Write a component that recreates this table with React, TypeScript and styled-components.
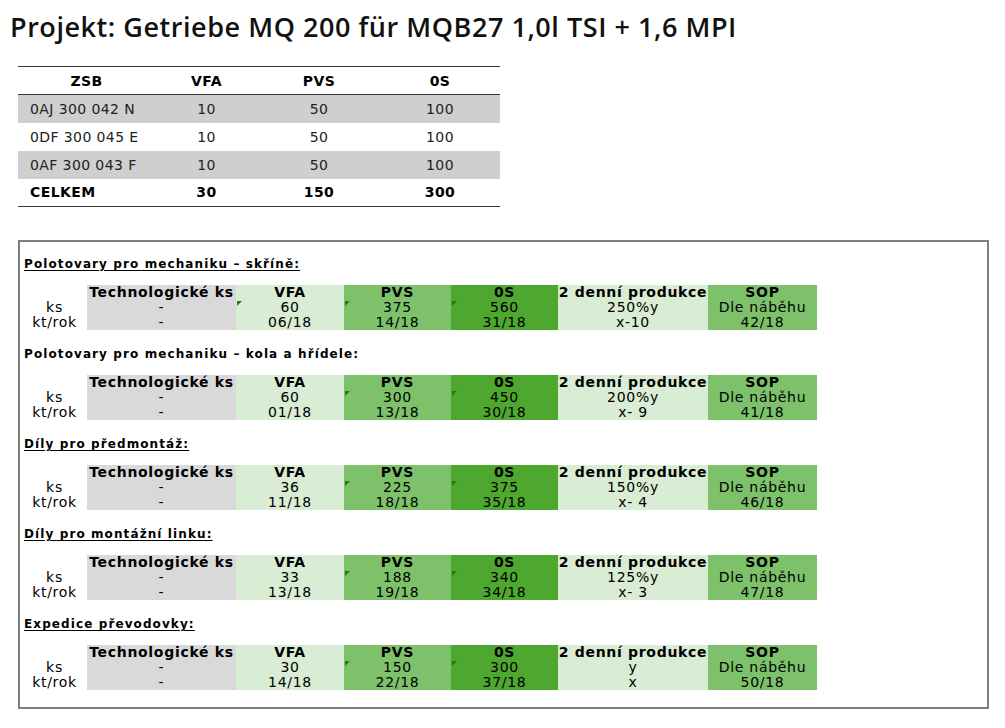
import React from 'react';
import styled, { createGlobalStyle } from 'styled-components';

const Global = createGlobalStyle`
  html, body { margin: 0; padding: 0; background: #ffffff; }
  body { font-family: "DejaVu Sans", Verdana, sans-serif; color: #000; }
`;

const Page = styled.div`
  width: 1005px;
  height: 728px;
  box-sizing: border-box;
  padding: 7px 0 0 10px;
`;

const Title = styled.h1`
  margin: 0;
  font-family: "Open Sans", sans-serif;
  font-weight: 600;
  font-size: 27px;
  line-height: 40px;
  letter-spacing: 0.55px;
  color: #111;
`;

const TopTable = styled.table`
  margin: 19px 0 0 8px;
  width: 482px;
  border-collapse: collapse;
  font-size: 14px;
  letter-spacing: 0.4px;
  border-top: 1px solid #333;
  border-bottom: 1px solid #333;
`;

const HeadCell = styled.th<{ $w: number }>`
  width: ${p => p.$w}px;
  height: 27px;
  padding: 0;
  font-weight: bold;
  text-align: center;
  border-bottom: 1px solid #333;
`;

const Row = styled.tr<{ $shade?: boolean }>`
  background: ${p => (p.$shade ? '#cfcfcf' : '#ffffff')};
  height: 28px;
`;

const Cell = styled.td<{ $left?: boolean; $bold?: boolean }>`
  padding: 0 0 0 ${p => (p.$left ? '12px' : '0')};
  text-align: ${p => (p.$left ? 'left' : 'center')};
  font-weight: ${p => (p.$bold ? 'bold' : 'normal')};
  color: ${p => (p.$bold ? '#000' : '#222')};
`;

const Box = styled.div`
  margin: 33px 0 0 8px;
  width: 971px;
  box-sizing: border-box;
  border: 2px solid #7f7f7f;
  padding: 15px 0 17px 4px;
  display: flex;
  flex-direction: column;
  gap: 17px;
`;

const Section = styled.div`
  display: flex;
  flex-direction: column;
  gap: 13px;
`;

const Heading = styled.div<{ $underline: boolean }>`
  font-size: 12px;
  font-weight: bold;
  line-height: 15px;
  letter-spacing: 1.1px;
  text-decoration: ${p => (p.$underline ? 'underline' : 'none')};
  text-underline-offset: 2px;
`;

const Grid = styled.div`
  display: flex;
  margin-left: -2px;
`;

const Column = styled.div<{ $w: number; $bg: string }>`
  width: ${p => p.$w}px;
  background: ${p => p.$bg};
  display: flex;
  flex-direction: column;
`;

const Line = styled.div<{ $bold?: boolean; $flag?: boolean }>`
  position: relative;
  height: 15px;
  line-height: 15px;
  font-size: 14px;
  letter-spacing: 0.7px;
  font-weight: ${p => (p.$bold ? 'bold' : 'normal')};
  text-align: center;
  white-space: nowrap;
  &::before {
    content: '';
    display: ${p => (p.$flag ? 'block' : 'none')};
    position: absolute;
    left: 1px;
    top: 1px;
    width: 0;
    height: 0;
    border-top: 5px solid #1e7b1e;
    border-right: 5px solid transparent;
  }
`;

const GRAY = '#d9d9d9';
const LIGHT = '#d9ecd4';
const MID = '#7dc26b';
const DARK = '#4ea72e';

type Sec = {
  title: string;
  underline: boolean;
  vfa: [string, string];
  pvs: [string, string];
  os: [string, string];
  den: [string, string];
  sop: string;
  flags: [boolean, boolean, boolean];
};

const sections: Sec[] = [
  { title: 'Polotovary pro mechaniku – skříně:', underline: true, vfa: ['60', '06/18'], pvs: ['375', '14/18'], os: ['560', '31/18'], den: ['250%y', 'x-10'], sop: '42/18', flags: [true, true, true] },
  { title: 'Polotovary pro mechaniku – kola a hřídele:', underline: false, vfa: ['60', '01/18'], pvs: ['300', '13/18'], os: ['450', '30/18'], den: ['200%y', 'x- 9'], sop: '41/18', flags: [false, true, true] },
  { title: 'Díly pro předmontáž:', underline: true, vfa: ['36', '11/18'], pvs: ['225', '18/18'], os: ['375', '35/18'], den: ['150%y', 'x- 4'], sop: '46/18', flags: [false, true, true] },
  { title: 'Díly pro montážní linku:', underline: true, vfa: ['33', '13/18'], pvs: ['188', '19/18'], os: ['340', '34/18'], den: ['125%y', 'x- 3'], sop: '47/18', flags: [false, true, true] },
  { title: 'Expedice převodovky:', underline: true, vfa: ['30', '14/18'], pvs: ['150', '22/18'], os: ['300', '37/18'], den: ['y', 'x'], sop: '50/18', flags: [false, true, true] },
];

const top = [
  { zsb: '0AJ 300 042 N', shade: true },
  { zsb: '0DF 300 045 E', shade: false },
  { zsb: '0AF 300 043 F', shade: true },
];

export default function App() {
  return (
    <Page>
      <Global />
      <Title>Projekt: Getriebe MQ 200 für MQB27 1,0l TSI + 1,6 MPI</Title>
      <TopTable>
        <thead>
          <tr>
            <HeadCell $w={137}>ZSB</HeadCell>
            <HeadCell $w={103}>VFA</HeadCell>
            <HeadCell $w={122}>PVS</HeadCell>
            <HeadCell $w={120}>0S</HeadCell>
          </tr>
        </thead>
        <tbody>
          {top.map(r => (
            <Row key={r.zsb} $shade={r.shade}>
              <Cell $left>{r.zsb}</Cell>
              <Cell>10</Cell>
              <Cell>50</Cell>
              <Cell>100</Cell>
            </Row>
          ))}
          <Row>
            <Cell $left $bold>CELKEM</Cell>
            <Cell $bold>30</Cell>
            <Cell $bold>150</Cell>
            <Cell $bold>300</Cell>
          </Row>
        </tbody>
      </TopTable>
      <Box>
        {sections.map(s => (
          <Section key={s.title}>
            <Heading $underline={s.underline}>{s.title}</Heading>
            <Grid>
              <Column $w={65} $bg="#ffffff">
                <Line>&nbsp;</Line>
                <Line>ks</Line>
                <Line>kt/rok</Line>
              </Column>
              <Column $w={149} $bg={GRAY}>
                <Line $bold>Technologické ks</Line>
                <Line>-</Line>
                <Line>-</Line>
              </Column>
              <Column $w={108} $bg={LIGHT}>
                <Line $bold>VFA</Line>
                <Line $flag={s.flags[0]}>{s.vfa[0]}</Line>
                <Line>{s.vfa[1]}</Line>
              </Column>
              <Column $w={107} $bg={MID}>
                <Line $bold>PVS</Line>
                <Line $flag={s.flags[1]}>{s.pvs[0]}</Line>
                <Line>{s.pvs[1]}</Line>
              </Column>
              <Column $w={107} $bg={DARK}>
                <Line $bold>0S</Line>
                <Line $flag={s.flags[2]}>{s.os[0]}</Line>
                <Line>{s.os[1]}</Line>
              </Column>
              <Column $w={150} $bg={LIGHT}>
                <Line $bold>2 denní produkce</Line>
                <Line>{s.den[0]}</Line>
                <Line>{s.den[1]}</Line>
              </Column>
              <Column $w={109} $bg={MID}>
                <Line $bold>SOP</Line>
                <Line>Dle náběhu</Line>
                <Line>{s.sop}</Line>
              </Column>
            </Grid>
          </Section>
        ))}
      </Box>
    </Page>
  );
}
